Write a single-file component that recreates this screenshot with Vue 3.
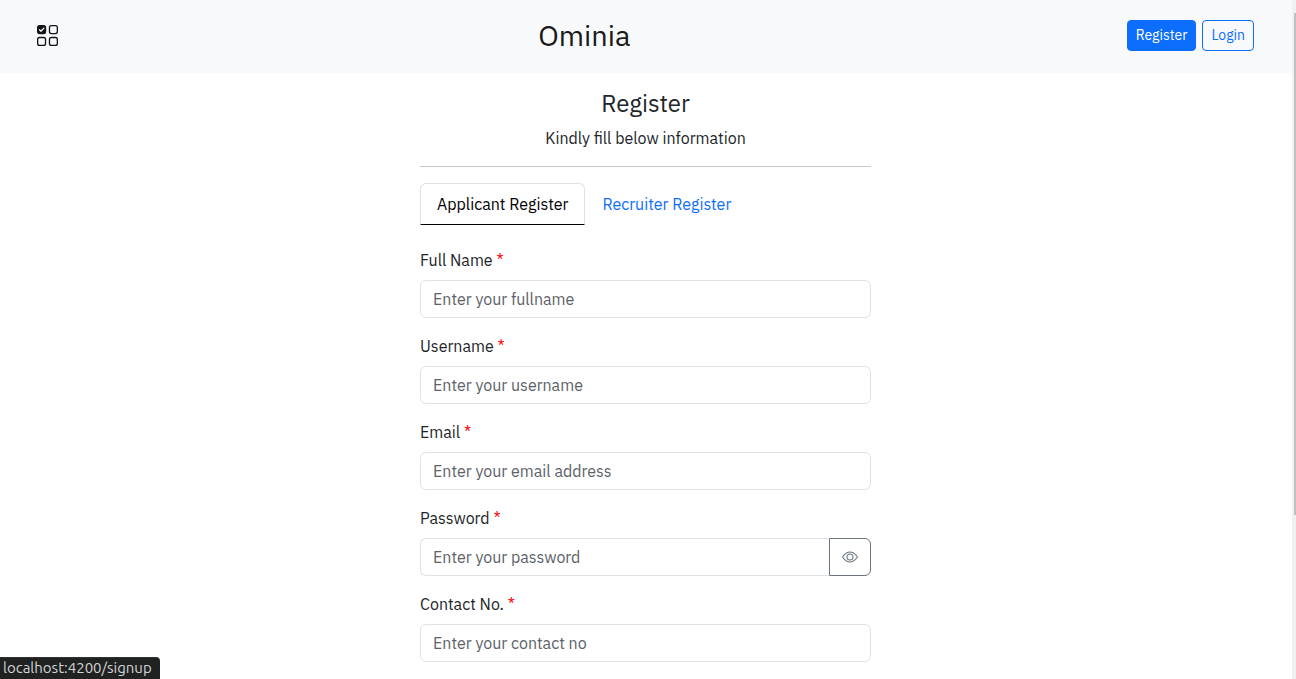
<script setup>
import { ref } from 'vue'

const tabs = ['Applicant Register', 'Recruiter Register']
const activeTab = ref(0)
const showPassword = ref(false)
const fields = [
  { id: 'fullname', label: 'Full Name', type: 'text', placeholder: 'Enter your fullname' },
  { id: 'username', label: 'Username', type: 'text', placeholder: 'Enter your username' },
  { id: 'email', label: 'Email', type: 'email', placeholder: 'Enter your email address' },
  { id: 'password', label: 'Password', type: 'password', placeholder: 'Enter your password' },
  { id: 'contact', label: 'Contact No.', type: 'tel', placeholder: 'Enter your contact no' },
]
const fieldType = (field) =>
  field.id === 'password' && showPassword.value ? 'text' : field.type
</script>

<template>
  <div class="shell">
    <div class="page">
      <header class="navbar">
        <a class="brand-icon" href="#" aria-label="Home">
          <svg width="21" height="21" viewBox="0 0 16 16" fill="none" stroke="#111417">
            <rect x="0" y="0" width="7" height="7" rx="2" fill="#111417" stroke="none" />
            <path d="M1.9 3.6 3 4.7 5.3 2.4" stroke="#f8f9fa" stroke-linecap="round" stroke-linejoin="round" />
            <rect x="9.5" y="0.5" width="6" height="6" rx="1.5" />
            <rect x="0.5" y="9.5" width="6" height="6" rx="1.5" />
            <rect x="9.5" y="9.5" width="6" height="6" rx="1.5" />
          </svg>
        </a>
        <a class="brand" href="#">Ominia</a>
        <nav class="actions">
          <button type="button" class="btn primary">Register</button>
          <button type="button" class="btn outline">Login</button>
        </nav>
      </header>

      <main class="content">
        <h1>Register</h1>
        <p class="lead">Kindly fill below information</p>
        <hr />
        <div class="tabs" role="tablist">
          <button
            v-for="(tab, i) in tabs"
            :key="tab"
            type="button"
            role="tab"
            class="tab"
            :class="{ active: activeTab === i }"
            :aria-selected="activeTab === i"
            @click="activeTab = i"
          >{{ tab }}</button>
        </div>

        <form @submit.prevent>
          <div v-for="field in fields" :key="field.id" class="field">
            <label :for="field.id">{{ field.label }} <span class="required">*</span></label>
            <div class="input-group">
              <input
                :id="field.id"
                :type="fieldType(field)"
                :placeholder="field.placeholder"
                :class="{ joined: field.id === 'password' }"
              />
              <button
                v-if="field.id === 'password'"
                type="button"
                class="toggle"
                aria-label="Show password"
                @click="showPassword = !showPassword"
              >
                <svg width="16" height="16" viewBox="0 0 16 16" fill="currentColor">
                  <path d="M16 8s-3-5.500-8-5.500S0 8 0 8s3 5.500 8 5.500S16 8 16 8M1.173 8a13 13 0 0 1 1.660-2.043C4.120 4.668 5.880 3.500 8 3.500s3.879 1.168 5.168 2.457A13 13 0 0 1 14.828 8q-.086.130-.195.288c-.335.480-.830 1.120-1.465 1.755C11.879 11.332 10.119 12.500 8 12.500s-3.879-1.168-5.168-2.457A13 13 0 0 1 1.172 8z" />
                  <path d="M8 5.500a2.500 2.500 0 1 0 0 5 2.500 2.500 0 0 0 0-5M4.500 8a3.500 3.500 0 1 1 7 0 3.500 3.500 0 0 1-7 0" />
                </svg>
              </button>
            </div>
          </div>
        </form>
      </main>
    </div>
    <div class="scroll-track"><div class="scroll-thumb"></div></div>
    <div class="link-status">localhost:4200/signup</div>
  </div>
</template>

<style>
body {
  margin: 0;
  background: #fff;
}
</style>

<style scoped>
.shell {
  display: flex;
  min-height: 100vh;
  color: #212529;
  font-family: "IBM Plex Sans", Roboto, sans-serif;
  font-size: 16px;
  line-height: 24px;
}
.shell * {
  box-sizing: border-box;
}
button,
input {
  margin: 0;
  font: inherit;
}
.page {
  flex: 1;
  min-width: 0;
}
.navbar {
  display: flex;
  align-items: center;
  justify-content: space-between;
  padding: 14px 38px 16px 37px;
  background: #f8f9fb;
}
.brand-icon {
  display: flex;
}
.brand {
  margin-right: 16px;
  color: #1a1a1a;
  font-size: 29px;
  line-height: 43px;
  text-decoration: none;
}
.actions {
  display: flex;
  gap: 6px;
}
.btn {
  padding: 4px 8px;
  border: 1px solid #0d6efd;
  border-radius: 4px;
  font-size: 14px;
  line-height: 21px;
}
.primary {
  background: #0d6efd;
  color: #fff;
}
.outline {
  background: transparent;
  color: #0d6efd;
}
.content {
  max-width: 452px;
  margin: 0 auto;
  padding: 16px 1px 1px 0;
}
h1 {
  margin: 0 0 8px;
  font-size: 24px;
  font-weight: 400;
  line-height: 29px;
  text-align: center;
}
.lead {
  margin: 0;
  text-align: center;
}
hr {
  margin: 16px 0;
  border: 0;
  border-top: 1px solid #c7c8c9;
}
.tabs {
  display: flex;
  margin-bottom: 23px;
}
.tab {
  padding: 8px 16px;
  border: 1px solid transparent;
  border-radius: 6px 6px 0 0;
  background: transparent;
  color: #0d6efd;
}
.tab.active {
  border-color: #dee2e6 #dee2e6 #000;
  color: #000;
}
.field {
  margin-bottom: 16px;
}
label {
  display: block;
  margin-bottom: 8px;
}
.required {
  color: #f00;
}
.input-group {
  display: flex;
}
input {
  flex: 1;
  min-width: 0;
  height: 38px;
  padding: 6px 12px;
  border: 1px solid #dee2e6;
  border-radius: 6px;
  background: #fff;
  color: #212529;
}
input::placeholder {
  color: #5c6268;
  opacity: 1;
}
.joined {
  border-right: 0;
  border-radius: 6px 0 0 6px;
}
.toggle {
  display: flex;
  align-items: center;
  padding: 6px 12px;
  border: 1px solid #6c757d;
  border-radius: 0 6px 6px 0;
  background: transparent;
  color: #6c757d;
}
.scroll-track {
  width: 4px;
  padding: 13px 0 0 2px;
  background: #f1f1f1;
}
.scroll-thumb {
  height: 74vh;
  background: #c1c1c1;
}
.link-status {
  position: fixed;
  bottom: 0;
  left: 0;
  padding: 0 8px 1px 3px;
  border-top: 1px solid #303332;
  border-radius: 0 4px 0 0;
  background: #202222;
  color: #d4d4d4;
  font-family: Ubuntu, "Noto Sans", sans-serif;
  font-size: 15px;
  line-height: 20px;
}
</style>
